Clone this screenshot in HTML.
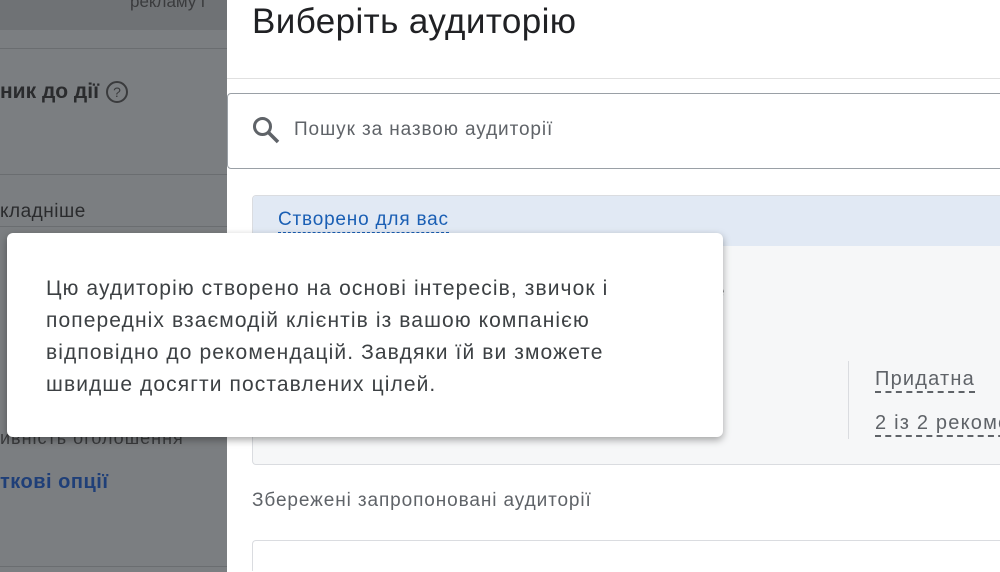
<!DOCTYPE html>
<html style="overflow:hidden;width:1000px;height:572px"><head><meta charset="utf-8"><style>
body{margin:0;width:1000px;height:572px;overflow:hidden;position:relative;font-family:"Liberation Sans","DejaVu Sans",sans-serif;background:#fff}
.left{position:absolute;left:0;top:0;width:227px;height:572px;background:#7b7e81;color:#2a2b2d;overflow:hidden}
.abs{position:absolute;white-space:nowrap}
.hl{position:absolute;left:0;width:227px;height:1px;background:#6a6d70}
.right{position:absolute;left:227px;top:0;width:773px;height:572px;background:#fff;overflow:hidden}
</style></head><body>
<div class="left">
 <div style="position:absolute;left:0;top:0;width:227px;height:30px;background:#6f7275"></div>
 <div class="abs" style="left:130px;top:-8px;font-size:17px;color:#3a3b3d">рекламу і</div>
 <div class="hl" style="top:48px"></div>
 <div class="abs" style="left:0;top:80px;font-size:21px;font-weight:bold">ник до дії</div>
 <div class="abs" style="left:106px;top:81px;width:18px;height:18px;border:2px solid #3a3b3d;border-radius:50%;font-size:14px;text-align:center;line-height:18px;color:#3a3b3d">?</div>
 <div class="hl" style="top:174px"></div>
 <div class="abs" style="left:0;top:201px;font-size:19px;letter-spacing:.5px">кладніше</div>
 <div class="hl" style="top:226px"></div>
 <div class="abs" style="left:0;top:428px;font-size:18px;color:#3a3b3d;letter-spacing:1px">ивність оголошення</div>
 <div class="abs" style="left:0;top:471px;font-size:20px;font-weight:bold;color:#1f3f78;letter-spacing:.5px">ткові опції</div>
 <div class="hl" style="top:566px"></div>
</div>
<div class="right">
 <div class="abs" style="left:25px;top:2px;font-size:35px;color:#202124;letter-spacing:.4px">Виберіть аудиторію</div>
 <div style="position:absolute;left:0;top:78px;width:773px;height:1px;background:#e0e0e0"></div>
 <div style="position:absolute;left:0;top:93px;width:790px;height:76px;border:1px solid #9aa0a6;border-radius:4px;box-sizing:border-box"></div>
 <svg style="position:absolute;left:24px;top:115px" width="30" height="30" viewBox="0 0 30 30"><circle cx="11.5" cy="11.5" r="8" fill="none" stroke="#5f6368" stroke-width="3"/><path d="M17.5 17.5L27 27" stroke="#5f6368" stroke-width="3.5"/></svg>
 <div class="abs" style="left:67px;top:119px;font-size:19px;letter-spacing:.9px;color:#5f6368">Пошук за назвою аудиторії</div>
 <div style="position:absolute;left:25px;top:195px;width:760px;height:270px;border:1px solid #dadce0;border-radius:4px;background:#f6f7f8;box-sizing:border-box;overflow:hidden">
  <div style="height:50px;background:#e1e9f4"></div>
 </div>
 <div class="abs" style="left:51px;top:208px;font-size:19px;letter-spacing:.8px;color:#1a5fb4;border-bottom:1px dashed #1a5fb4;line-height:24px">Створено для вас</div>
 <div class="abs" style="left:485px;top:278px;font-size:22px;font-weight:bold;color:#202124">е</div>
 <div style="position:absolute;left:621px;top:361px;width:1px;height:78px;background:#dadce0"></div>
 <div class="abs" style="left:648px;top:367px;font-size:20px;letter-spacing:1.2px;color:#5f6368;border-bottom:2px dashed #5f6368;line-height:24px">Придатна</div>
 <div class="abs" style="left:648px;top:411px;font-size:20px;letter-spacing:1.2px;color:#5f6368;border-bottom:2px dashed #5f6368;line-height:24px">2 із 2 рекоменд</div>
 <div class="abs" style="left:25px;top:490px;font-size:19px;letter-spacing:.9px;color:#5f6368">Збережені запропоновані аудиторії</div>
 <div style="position:absolute;left:25px;top:540px;width:760px;height:30px;border:1px solid #dadce0;border-bottom:none;border-radius:4px 4px 0 0"></div>
</div>
<div style="position:absolute;left:7px;top:233px;width:716px;height:204px;background:#fff;border-radius:6px;box-shadow:0 3px 8px rgba(0,0,0,.35)">
 <div style="position:absolute;left:39px;top:40px;font-size:21px;letter-spacing:1.1px;line-height:32px;color:#3c4043;width:670px;white-space:nowrap">Цю аудиторію створено на основі інтересів, звичок і<br>попередніх взаємодій клієнтів із вашою компанією<br>відповідно до рекомендацій. Завдяки їй ви зможете<br>швидше досягти поставлених цілей.</div>
</div>
</body></html>
